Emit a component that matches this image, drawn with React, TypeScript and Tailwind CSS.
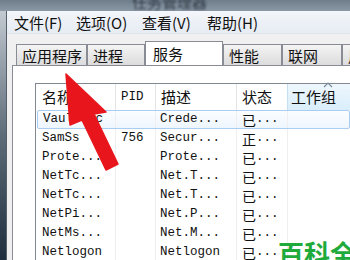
import React from "react";

const cjk = '"Noto Sans CJK SC", "Noto Sans", sans-serif';
const mono = '"Liberation Mono", "Noto Sans CJK SC", monospace';

type Row = { name: string; pid: string; desc: string; status: string };
const rows: Row[] = [
  { name: "Vaultsvc", pid: "", desc: "Crede...", status: "已..." },
  { name: "SamSs", pid: "756", desc: "Secur...", status: "正..." },
  { name: "Prote...", pid: "", desc: "Prote...", status: "已..." },
  { name: "NetTc...", pid: "", desc: "Net.T...", status: "已..." },
  { name: "NetTc...", pid: "", desc: "Net.T...", status: "已..." },
  { name: "NetPi...", pid: "", desc: "Net.P...", status: "已..." },
  { name: "NetMs...", pid: "", desc: "Net.M...", status: "已..." },
  { name: "Netlogon", pid: "", desc: "Netlogon", status: "已..." },
];

function Status({ s }: { s: string }) {
  const c = s.slice(0, 1);
  const rest = s.slice(1);
  return (
    <span className="flex items-center">
      <span className="text-[14px] leading-none" style={{ fontFamily: cjk }}>{c}</span>
      <span>{rest}</span>
    </span>
  );
}

function Tab({ label, w }: { label: string; w: string }) {
  return (
    <div
      className={`${w} h-[21px] shrink-0 border border-b-0 border-[#898c95] bg-gradient-to-b from-[#f4f4f4] to-[#dcdcdc] text-[15px] text-[#111] leading-none pl-[5px] pt-[3px] overflow-hidden whitespace-nowrap`}
    >
      {label}
    </div>
  );
}

export default function App() {
  return (
    <div className="relative w-[350px] h-[260px] overflow-hidden bg-[#f0f0f0] flex flex-col" style={{ fontFamily: cjk }}>
      {/* title bar */}
      <div className="h-[11px] shrink-0 bg-gradient-to-b from-[#6f7e8c] to-[#8b98a5] relative overflow-hidden">
        <div className="absolute left-[132px] top-[-9px] text-[15px] text-[#1d2630] blur-[1.2px] opacity-80 whitespace-nowrap">任务管理器</div>
      </div>
      <div className="flex flex-1 min-h-0">
        {/* left frame */}
        <div className="w-[6px] shrink-0 bg-gradient-to-b from-[#c3cad1] via-[#5e6c79] to-[#1f2f3d]" />
        <div className="w-px shrink-0 bg-[#55606b]" />
        <div className="flex-1 flex flex-col min-w-0">
          {/* menu bar */}
          <div className="h-[23px] shrink-0 bg-gradient-to-b from-[#f3f6fa] to-[#e6ecf3] border-b border-[#dfe4ea] flex items-center pl-[7px] text-[15px] text-[#111] leading-none">
            <span className="w-[62px] shrink-0">文件(F)</span>
            <span className="w-[66px] shrink-0">选项(O)</span>
            <span className="w-[65px] shrink-0">查看(V)</span>
            <span className="shrink-0">帮助(H)</span>
          </div>
          {/* tab strip + panel */}
          <div className="flex flex-1 min-h-0 pl-[5px]">
            <div className="flex-1 flex flex-col min-w-0">
              <div className="h-[31px] shrink-0 flex items-end pl-[4px] overflow-hidden">
                <Tab label="应用程序" w="w-[71px]" />
                <Tab label="进程" w="w-[58px]" />
                <div className="relative z-10 w-[78px] h-[25px] shrink-0 border border-b-0 border-[#898c95] bg-white text-[15px] text-[#111] leading-none pl-[7px] pt-[4px] mb-[-1px] whitespace-nowrap">
                  服务
                </div>
                <Tab label="性能" w="w-[59px]" />
                <Tab label="联网" w="w-[60px]" />
                <Tab label="用户" w="w-[60px]" />
              </div>
              {/* panel */}
              <div className="flex-1 min-h-0 bg-white border-t border-l border-[#898c95] pl-[22px] pt-[17px]">
                <div className="border-t border-l border-[#828790] h-[300px]" style={{ fontFamily: mono }}>
                  {/* header */}
                  <div className="relative flex h-[26px] text-[#111]">
                    <div className="w-[80px] shrink-0 border-r border-[#e3e3e3] pl-[6px] flex items-center text-[15px]" style={{ fontFamily: cjk }}>名称</div>
                    <div className="w-[40px] shrink-0 border-r border-[#e3e3e3] pl-[5px] flex items-center text-[12.5px]">PID</div>
                    <div className="w-[81px] shrink-0 border-r border-[#e3e3e3] pl-[5px] flex items-center text-[15px]" style={{ fontFamily: cjk }}>描述</div>
                    <div className="w-[51px] shrink-0 border-r border-[#c6def2] pl-[5px] flex items-center text-[15px]" style={{ fontFamily: cjk }}>状态</div>
                    <div className="flex-1 bg-gradient-to-b from-[#eef7fd] to-[#d9eefb] pl-[3px] flex items-center text-[15px]" style={{ fontFamily: cjk }}>工作组</div>
                    <svg className="absolute left-[287px] top-[-2px]" width="10" height="6" viewBox="0 0 10 6">
                      <path d="M1 5 L5 1 L9 5" fill="none" stroke="#7a8a9a" strokeWidth="1.2" />
                    </svg>
                  </div>
                  {/* rows */}
                  {rows.map((r, i) => (
                    <div
                      key={i}
                      className={`flex h-[19px] text-[12.5px] text-[#111] leading-none ${i === 0 ? "border border-[#aacdf1] rounded-[2px] bg-gradient-to-b from-[#fbfdff] to-[#eef6fd] ml-px" : ""}`}
                    >
                      <div className={`${i === 0 ? "w-[78px]" : "w-[80px]"} shrink-0 border-r border-[#efefef] ${i === 0 ? "pl-[5px]" : "pl-[6px]"} flex items-center`}>{r.name}</div>
                      <div className="w-[40px] shrink-0 border-r border-[#efefef] pl-[5px] flex items-center">{r.pid}</div>
                      <div className="w-[81px] shrink-0 border-r border-[#efefef] pl-[4px] flex items-center">{r.desc}</div>
                      <div className="w-[51px] shrink-0 border-r border-[#efefef] pl-[5px] flex items-center">
                        <Status s={r.status} />
                      </div>
                      <div className="flex-1" />
                    </div>
                  ))}
                </div>
              </div>
            </div>
          </div>
        </div>
      </div>

      {/* red arrow overlay */}
      <svg className="absolute left-0 top-0 pointer-events-none" width="350" height="260" viewBox="0 0 350 260">
        <defs>
          <filter id="soft" x="-20%" y="-20%" width="140%" height="140%">
            <feGaussianBlur stdDeviation="0.7" />
          </filter>
        </defs>
        <polygon
          points="66,74 106,112 94,114 118,164 106,170 82,120 70,125"
          fill="#e8161c"
          stroke="#e8161c"
          strokeWidth="1.5"
          strokeLinejoin="round"
          filter="url(#soft)"
        />
      </svg>

      {/* watermark */}
      <div className="absolute left-[278px] top-[240px] text-[26px] font-bold leading-none text-[#1faa3c] whitespace-nowrap" style={{ fontFamily: cjk }}>
        百科全书
      </div>
    </div>
  );
}
